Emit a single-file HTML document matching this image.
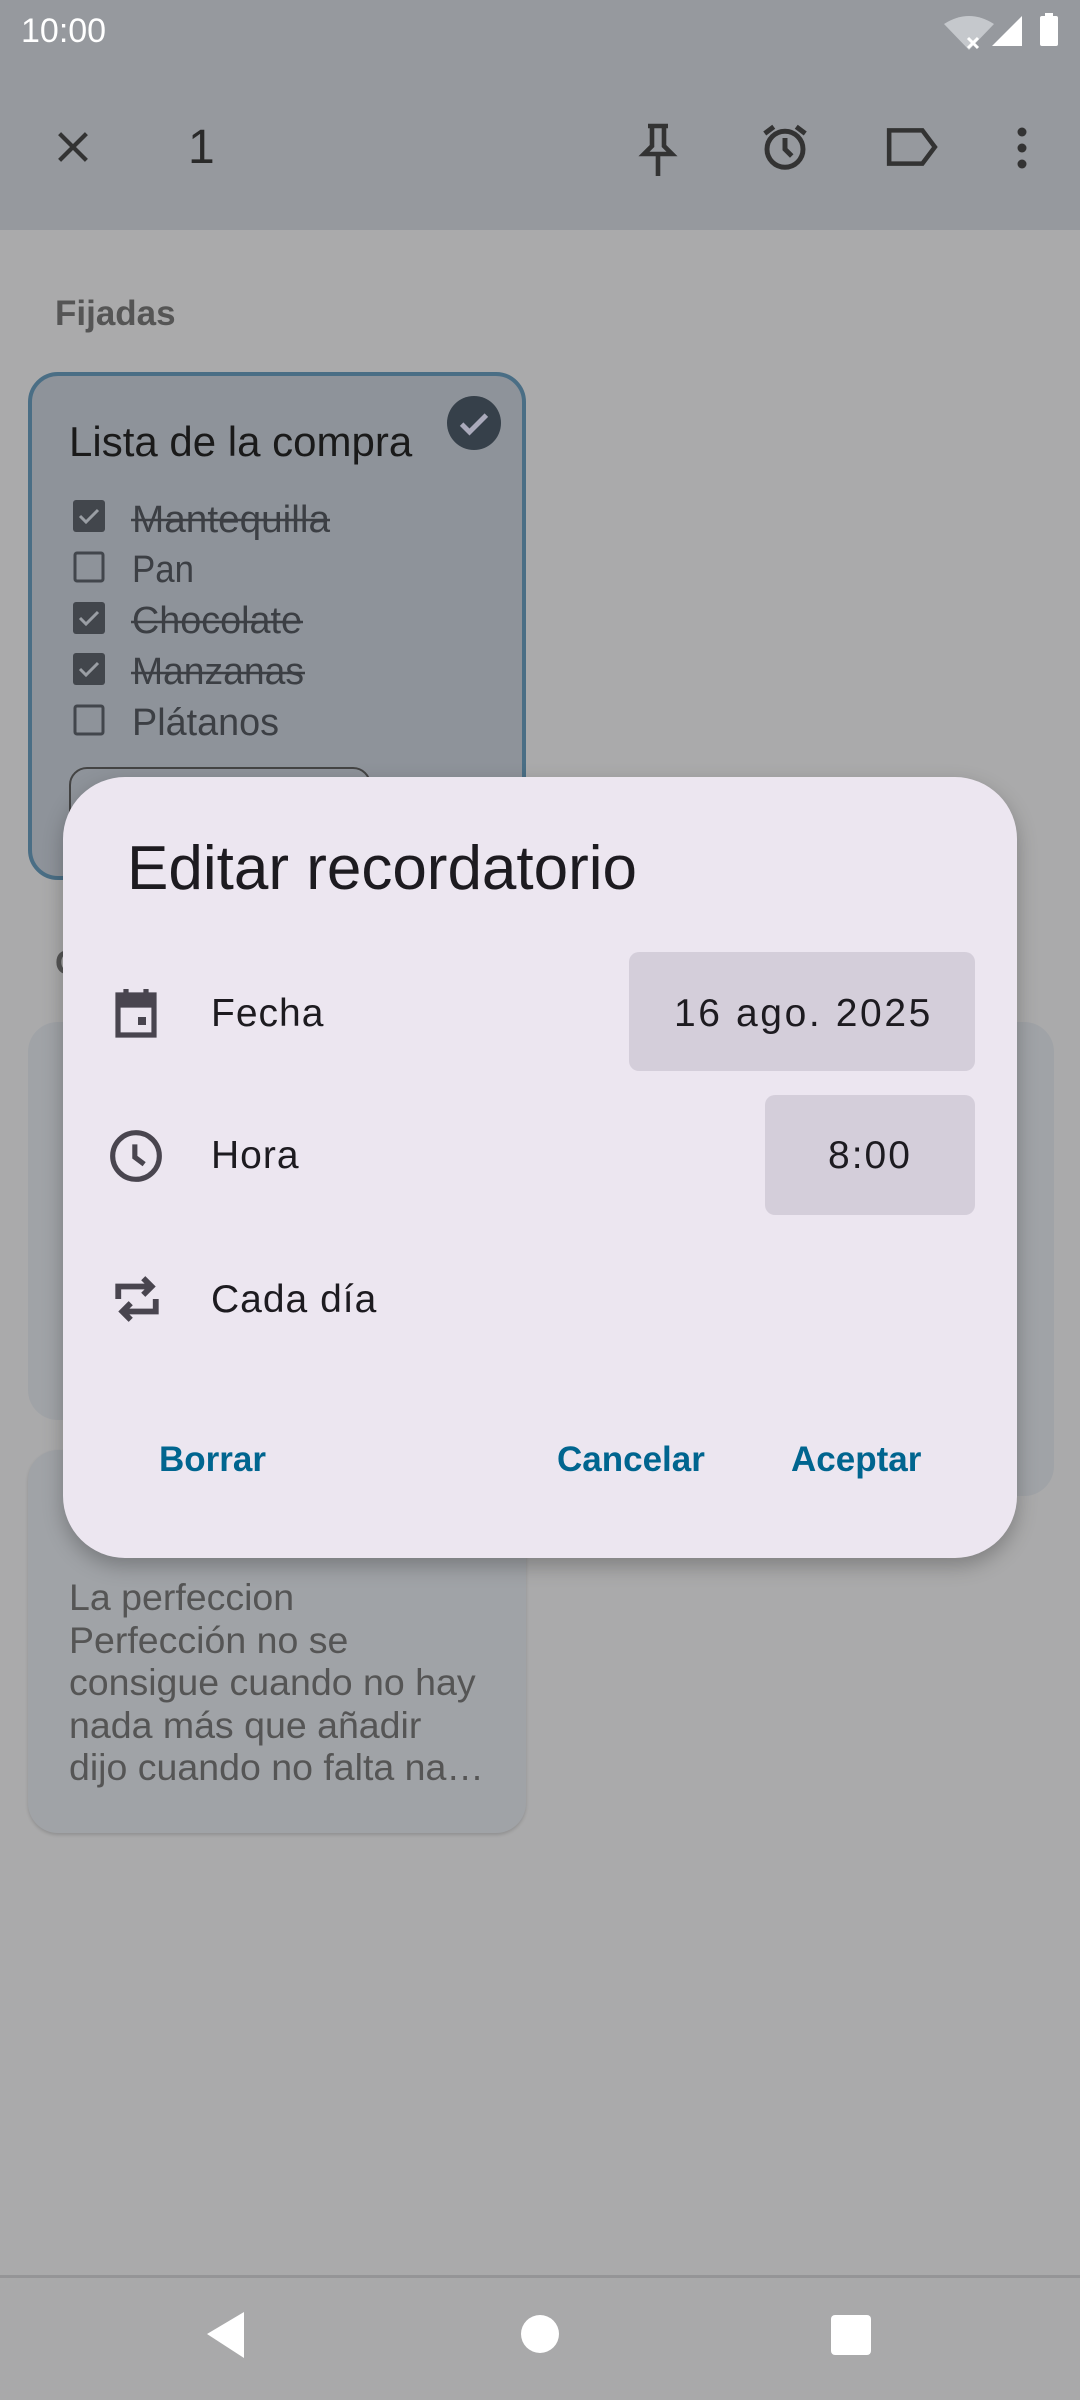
<!DOCTYPE html>
<html><head><meta charset="utf-8"><style>
*{margin:0;padding:0;box-sizing:border-box}
body{width:1080px;height:2400px;background:#aaaaab;position:relative;overflow:hidden;font-family:"Liberation Sans",sans-serif}
.a{position:absolute}
.t{position:absolute;white-space:nowrap;line-height:1}
</style></head><body>
<div class="a" style="left:0;top:0;width:1080px;height:230px;background:#96999e"></div>
<div class="t" style="left:21px;top:14px;font-size:34px;color:#fff">10:00</div>
<svg class="a" style="left:940px;top:12px" width="130" height="40" viewBox="0 0 130 40">
<path d="M4 12 Q29 -4 54 12 L29 38 Z" fill="#c5c8cc"/>
<path d="M28 26 l10 10 M38 26 l-10 10" stroke="#fff" stroke-width="3"/>
<path d="M82 4 L82 34 L52 34 Z" fill="#fff"/>
<rect x="100" y="4" width="18" height="30" rx="2" fill="#fff"/><rect x="105" y="1" width="8" height="4" fill="#fff"/>
</svg>
<svg class="a" style="left:50px;top:124px" width="46" height="46" viewBox="0 0 24 24"><path d="M5 5L19 19M19 5L5 19" stroke="#333" stroke-width="2.2"/></svg>
<div class="t" style="left:188px;top:124px;font-size:48px;color:#2a2a2a">1</div>
<svg class="a" style="left:634px;top:120px" width="48" height="60" viewBox="0 0 24 30"><path d="M7 3h10M9 3v10l-4 4h14l-4-4V3M12 17v11" fill="none" stroke="#333" stroke-width="2.3"/></svg>
<svg class="a" style="left:758px;top:120px" width="54" height="54" viewBox="0 0 24 24"><circle cx="12" cy="13" r="8" fill="none" stroke="#333" stroke-width="2.2"/><path d="M12 8v5l3 3M3 6l4-3M21 6l-4-3" fill="none" stroke="#333" stroke-width="2.2"/></svg>
<svg class="a" style="left:885px;top:124px" width="54" height="46" viewBox="0 0 26 22"><path d="M2 3h16l6 8-6 8H2z" fill="none" stroke="#333" stroke-width="2.2"/></svg>
<svg class="a" style="left:1010px;top:122px" width="24" height="56"><circle cx="12" cy="10" r="4.5" fill="#333"/><circle cx="12" cy="26" r="4.5" fill="#333"/><circle cx="12" cy="42" r="4.5" fill="#333"/></svg>
<div class="t" style="left:55px;top:296px;font-size:35px;font-weight:bold;color:#555">Fijadas</div>
<div class="a" style="left:28px;top:372px;width:498px;height:508px;border:4px solid #4a6e85;border-radius:30px;background:#8e939a"></div>
<div class="t" style="left:69px;top:421px;font-size:42px;color:#1a1a1a">Lista de la compra</div>
<svg class="a" style="left:447px;top:396px" width="54" height="54" viewBox="0 0 24 24"><circle cx="12" cy="12" r="12" fill="#36404a"/><path d="M6.5 12.5l3.5 3.5 7.5-7.5" fill="none" stroke="#aab" stroke-width="2.2"/></svg>
<div class="a" style="left:69px;top:767px;width:302px;height:120px;border:2px solid #444;border-radius:18px"></div>
<div class="t" style="left:55px;top:946px;font-size:34px;font-weight:bold;color:#555">O</div>
<div class="a" style="left:28px;top:1022px;width:498px;height:398px;border-radius:30px;background:#a0a3a7"></div>
<div class="a" style="left:558px;top:1022px;width:496px;height:474px;border-radius:30px;background:#a0a3a7"></div>
<div class="a" style="left:28px;top:1450px;width:498px;height:383px;border-radius:30px;background:#a0a3a7;box-shadow:0 2px 3px rgba(0,0,0,.15)"></div>
<div class="a" style="left:69px;top:1576px;font-size:37.5px;line-height:42.5px;color:#555;white-space:nowrap">La perfeccion<br>Perfección no se<br>consigue cuando no hay<br>nada más que añadir<br>dijo cuando no falta na…</div>
<svg class="a" style="left:60px;top:480px" width="420" height="270">
<g font-family="Liberation Sans" font-size="38" fill="#3c3f44">
<rect x="13" y="20" width="32" height="32" rx="3" fill="#42464c"/><path d="M20 36l6 6 12-12" stroke="#9a9ea4" stroke-width="3" fill="none"/>
<text x="72" y="52" textLength="198" lengthAdjust="spacingAndGlyphs">Mantequilla</text><line x1="71" y1="40" x2="270" y2="40" stroke="#3c3f44" stroke-width="2.5"/>
<rect x="15" y="73" width="28" height="28" rx="2" fill="none" stroke="#42464c" stroke-width="3"/>
<text x="72" y="102" textLength="62" lengthAdjust="spacingAndGlyphs">Pan</text>
<rect x="13" y="122" width="32" height="32" rx="3" fill="#42464c"/><path d="M20 138l6 6 12-12" stroke="#9a9ea4" stroke-width="3" fill="none"/>
<text x="72" y="153" textLength="170" lengthAdjust="spacingAndGlyphs">Chocolate</text><line x1="71" y1="142" x2="243" y2="142" stroke="#3c3f44" stroke-width="2.5"/>
<rect x="13" y="173" width="32" height="32" rx="3" fill="#42464c"/><path d="M20 189l6 6 12-12" stroke="#9a9ea4" stroke-width="3" fill="none"/>
<text x="72" y="204" textLength="172" lengthAdjust="spacingAndGlyphs">Manzanas</text><line x1="71" y1="193" x2="245" y2="193" stroke="#3c3f44" stroke-width="2.5"/>
<rect x="15" y="226" width="28" height="28" rx="2" fill="none" stroke="#42464c" stroke-width="3"/>
<text x="72" y="255" textLength="147" lengthAdjust="spacingAndGlyphs">Plátanos</text>
</g></svg>
<!-- dialog -->
<div class="a" style="left:63px;top:777px;width:954px;height:781px;border-radius:62px;background:#ece6f0;box-shadow:0 8px 20px rgba(0,0,0,.25)"></div>
<div class="t" style="left:127px;top:838px;font-size:62px;color:#1d1b20">Editar recordatorio</div>
<svg class="a" style="left:112px;top:987px" width="48" height="52" viewBox="0 0 24 26"><path d="M3 4h18v20H3z M3 9h18" fill="none" stroke="#49454f" stroke-width="2.6"/><rect x="3" y="4" width="18" height="5" fill="#49454f"/><path d="M7 1v5M17 1v5" stroke="#49454f" stroke-width="2.6"/><rect x="13" y="15" width="4" height="4" fill="#49454f"/></svg>
<div class="t" style="left:211px;top:994px;font-size:39px;color:#1d1b20;letter-spacing:1px">Fecha</div>
<div class="a" style="left:629px;top:952px;width:346px;height:119px;border-radius:10px;background:#d4ceda"></div>
<div class="t" style="left:674px;top:994px;font-size:39px;color:#1d1b20;letter-spacing:2.6px">16 ago. 2025</div>
<svg class="a" style="left:108px;top:1128px" width="56" height="56" viewBox="0 0 24 24"><circle cx="12" cy="12" r="10" fill="none" stroke="#49454f" stroke-width="2.2"/><path d="M11.5 7v5.5l4 3" fill="none" stroke="#49454f" stroke-width="2.2"/></svg>
<div class="t" style="left:211px;top:1136px;font-size:39px;color:#1d1b20;letter-spacing:1px">Hora</div>
<div class="a" style="left:765px;top:1095px;width:210px;height:120px;border-radius:10px;background:#d4ceda"></div>
<div class="t" style="left:828px;top:1136px;font-size:39px;color:#1d1b20;letter-spacing:2px">8:00</div>
<svg class="a" style="left:112px;top:1271px" width="50" height="56" viewBox="0 0 24 26"><path d="M3 13V7h15 M15 3l4 4-4 4 M21 13v6H6 M9 15l-4 4 4 4" fill="none" stroke="#49454f" stroke-width="2.8"/></svg>
<div class="t" style="left:211px;top:1280px;font-size:39px;color:#1d1b20;letter-spacing:1px">Cada día</div>
<div class="t" style="left:159px;top:1442px;font-size:35px;font-weight:bold;color:#00658f">Borrar</div>
<div class="t" style="left:557px;top:1442px;font-size:35px;font-weight:bold;color:#00658f">Cancelar</div>
<div class="t" style="left:791px;top:1442px;font-size:35px;font-weight:bold;color:#00658f">Aceptar</div>
<!-- nav -->
<div class="a" style="left:0;top:2275px;width:1080px;height:3px;background:#959597"></div>
<div class="a" style="left:0;top:2278px;width:1080px;height:122px;background:#a9a9aa"></div>
<svg class="a" style="left:200px;top:2310px" width="50" height="50"><path d="M44 2V48L7 24Z" fill="#fff"/></svg>
<div class="a" style="left:521px;top:2315px;width:38px;height:38px;border-radius:50%;background:#fff"></div>
<div class="a" style="left:831px;top:2315px;width:40px;height:40px;border-radius:4px;background:#fff"></div>
</body></html>
